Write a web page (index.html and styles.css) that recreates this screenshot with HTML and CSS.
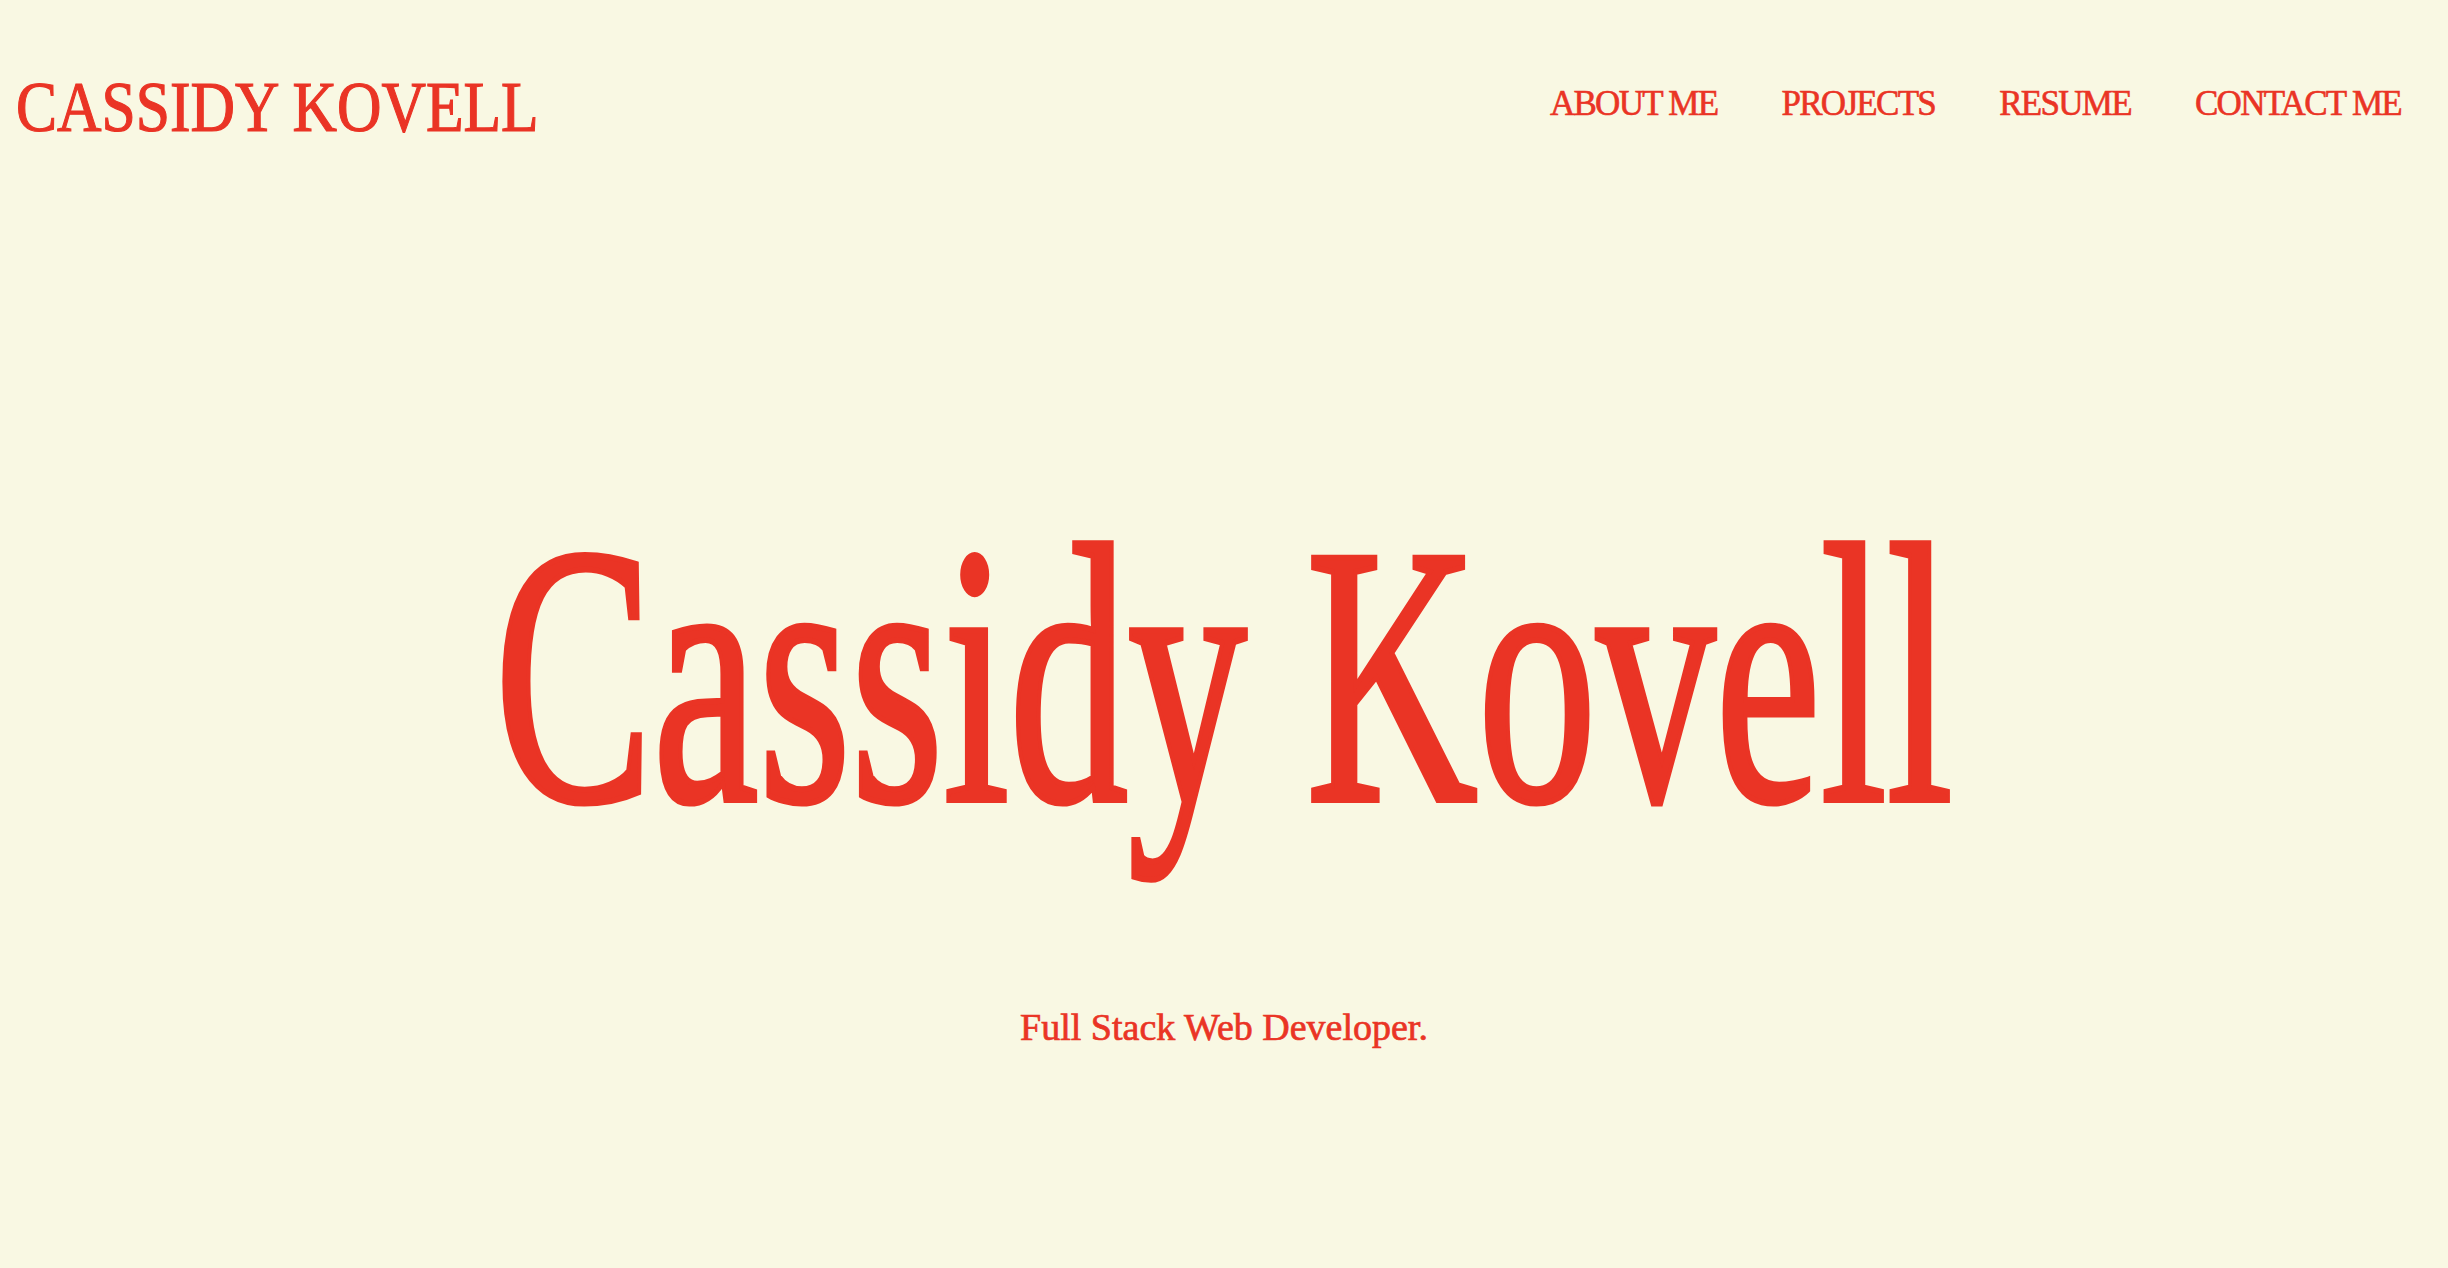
FILE: index.html
```html
<!DOCTYPE html>
<html lang="en">
<head>
<meta charset="utf-8">
<title>Cassidy Kovell</title>
<link rel="stylesheet" href="styles.css">
</head>
<body>
<header class="site-header">
  <a class="logo" href="#">CASSIDY KOVELL</a>
  <nav class="nav">
    <a class="nav-link" href="#about">ABOUT ME</a>
    <a class="nav-link" href="#projects">PROJECTS</a>
    <a class="nav-link" href="#resume">RESUME</a>
    <a class="nav-link" href="#contact">CONTACT ME</a>
  </nav>
</header>
<main class="hero">
  <h1 class="hero-title">Cassidy Kovell</h1>
  <p class="hero-sub">Full Stack Web Developer.</p>
</main>
</body>
</html>
```
FILE: styles.css
```css
html, body {
  margin: 0;
  padding: 0;
  background: #F9F8E3;
}
body {
  min-height: 1268px;
  color: #EA3425;
  font-family: "Liberation Serif", "Times New Roman", serif;
  overflow: hidden;
}
a {
  color: inherit;
  text-decoration: none;
}
.site-header {
  display: flex;
  justify-content: space-between;
  align-items: flex-start;
  padding: 70px 47px 0 16px;
}
.logo {
  display: inline-block;
  font-size: 72px;
  line-height: 74px;
  white-space: nowrap;
  -webkit-text-stroke: 1.2px #EA3425;
  transform: scaleX(0.855);
  transform-origin: left center;
}
.nav {
  display: flex;
  gap: 64px;
  margin-top: 17px;
}
.nav-link {
  font-size: 35px;
  line-height: 34px;
  letter-spacing: -1.7px;
  white-space: nowrap;
  -webkit-text-stroke: 0.6px #EA3425;
}
.hero {
  display: flex;
  flex-direction: column;
  align-items: center;
}
.hero-title {
  margin: 346px 0 0;
  font-weight: normal;
  font-size: 370px;
  line-height: 370px;
  white-space: nowrap;
  -webkit-text-stroke: 6px #EA3425;
  transform: scaleX(0.642);
  transform-origin: center center;
}
.hero-sub {
  margin: 149px 0 0;
  font-size: 38px;
  line-height: 37px;
  -webkit-text-stroke: 0.7px #EA3425;
}
```
